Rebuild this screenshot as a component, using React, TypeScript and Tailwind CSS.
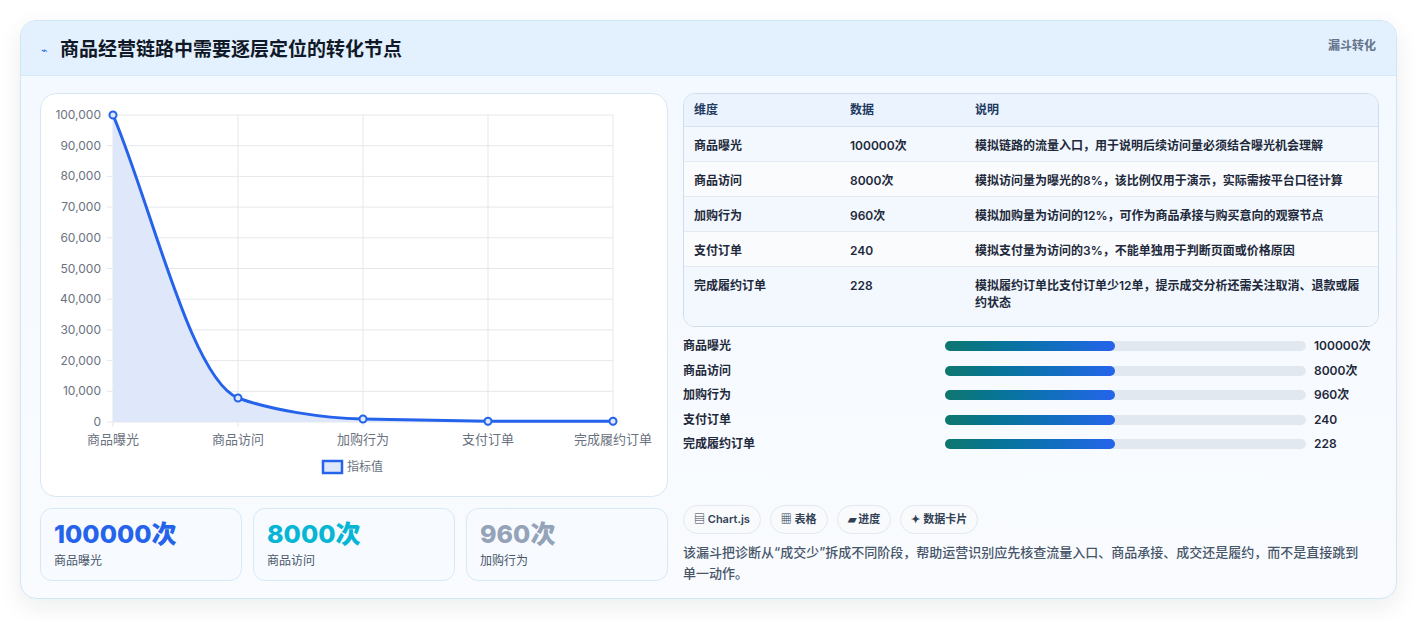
import React from 'react'

const rows = [
  ['商品曝光', '100000次', '模拟链路的流量入口，用于说明后续访问量必须结合曝光机会理解'],
  ['商品访问', '8000次', '模拟访问量为曝光的8%，该比例仅用于演示，实际需按平台口径计算'],
  ['加购行为', '960次', '模拟加购量为访问的12%，可作为商品承接与购买意向的观察节点'],
  ['支付订单', '240', '模拟支付量为访问的3%，不能单独用于判断页面或价格原因'],
  ['完成履约订单', '228', '模拟履约订单比支付订单少12单，提示成交分析还需关注取消、退款或履约状态'],
]

// chart coords are local to the chart box (box origin at 41,94)
const X = [72, 197, 322, 447, 572]
const yTop = 21
const yBot = 328
const yLabels = ['100,000', '90,000', '80,000', '70,000', '60,000', '50,000', '40,000', '30,000', '20,000', '10,000', '0']
const pts: [number, number][] = [
  [72, 21],
  [197, 304],
  [322, 325],
  [447, 327.3],
  [572, 327.3],
]

function Chart() {
  const line = `M72,21 C110,110 150,285 197,304 C230,316 280,324 322,325 C370,326 410,327 447,327.3 L572,327.3`
  return (
    <svg width="625" height="401" className="block" style={{ fontFamily: 'Inter, "Noto Sans CJK SC", sans-serif' }}>
      {yLabels.map((l, i) => {
        const y = yTop + (i * (yBot - yTop)) / 10
        return (
          <g key={l}>
            <line x1={66} x2={572} y1={y} y2={y} stroke="#e5e7eb" />
            <text x={60} y={y + 4} textAnchor="end" fontSize="12" fill="#6b7280">{l}</text>
          </g>
        )
      })}
      {X.map((x) => (
        <line key={x} x1={x} x2={x} y1={yTop} y2={yBot + 5} stroke="#e5e7eb" />
      ))}
      <path d={`${line} L572,328 L72,328 Z`} fill="#dfe8fb" />
      <path d={line} fill="none" stroke="#2563eb" strokeWidth="3" />
      {pts.map(([x, y], i) => (
        <circle key={i} cx={x} cy={y} r="3.5" fill="#dfe8fb" stroke="#2563eb" strokeWidth="2" />
      ))}
      {['商品曝光', '商品访问', '加购行为', '支付订单', '完成履约订单'].map((t, i) => (
        <text key={t} x={X[i]} y={350} textAnchor="middle" fontSize="13" fill="#6b7280">{t}</text>
      ))}
      <rect x={282} y={367} width={19} height={12} fill="#dfe8fb" stroke="#2563eb" strokeWidth="2.5" />
      <text x={306} y={377} fontSize="12" fill="#6b7280">指标值</text>
    </svg>
  )
}

export default function App() {
  return (
    <div className="w-[1417px] h-[621px] bg-white pt-5 pl-5" style={{ fontFamily: 'Inter, "Noto Sans CJK SC", sans-serif' }}>
      <div className="w-[1377px] h-[579px] rounded-2xl border border-[#cfe6f7] bg-gradient-to-b from-[#f3f9ff] to-[#f9fbfe] shadow-[0_8px_24px_rgba(15,23,42,0.08)] overflow-hidden">
        {/* Header */}
        <div className="h-[55px] bg-[#e3f0fd] border-b border-[#d5e8fa] flex items-start justify-between px-5">
          <div className="flex items-center gap-3 mt-[15px]">
            <span className="text-[#2563eb] text-[11px]">⌁</span>
            <h1 className="text-[19px] font-bold text-[#111827]">商品经营链路中需要逐层定位的转化节点</h1>
          </div>
          <span className="text-[12px] font-semibold text-[#64748b] mt-[16px]">漏斗转化</span>
        </div>

        <div className="flex gap-[15px] pl-[19px] pt-[17px]">
          {/* Left */}
          <div className="w-[628px] flex flex-col gap-[11px]">
            <div className="h-[404px] rounded-2xl border border-[#d9e7f2] bg-white">
              <Chart />
            </div>
            <div className="flex gap-[11px]">
              {[
                ['100000次', '商品曝光', 'text-[#2563eb]'],
                ['8000次', '商品访问', 'text-[#06b6d4]'],
                ['960次', '加购行为', 'text-[#94a3b8]'],
              ].map(([v, l, c]) => (
                <div key={l} className="w-[202px] h-[73px] rounded-xl border border-[#d6e9f5] bg-[#f7fbff] px-[13px] pt-[9px]">
                  <div className={`text-[25px] font-extrabold leading-[32px] ${c}`}>{v}</div>
                  <div className="text-[12px] text-[#475569] mt-[2px]">{l}</div>
                </div>
              ))}
            </div>
          </div>

          {/* Right */}
          <div className="w-[696px] flex flex-col">
            <div className="rounded-xl border border-[#cfdceb] overflow-hidden bg-white text-[12px] font-semibold text-[#1e293b]">
              <div className="flex h-[33px] items-center bg-[#eaf3fe] border-b border-[#d6e2ef] text-[#1e3a5f]">
                <div className="w-[166px] pl-[10px]">维度</div>
                <div className="w-[125px]">数据</div>
                <div className="flex-1">说明</div>
              </div>
              {rows.map((r, i) => (
                <div key={r[0]} className={`flex items-start pt-[10px] ${i === 4 ? 'h-[59px]' : 'h-[35px] border-b border-[#e3eaf2]'} ${i % 2 === 0 ? 'bg-[#f2f8fd]' : 'bg-[#f9fbfd]'}`}>
                  <div className="w-[166px] pl-[10px]">{r[0]}</div>
                  <div className="w-[125px]">{r[1]}</div>
                  <div className="flex-1 pr-[14px] leading-[17px]">{r[2]}</div>
                </div>
              ))}
            </div>

            <div className="mt-[11px] flex flex-col gap-[8px]">
              {rows.map((r) => (
                <div key={r[0]} className="flex items-center h-[16.5px] text-[12px] font-semibold text-[#1e293b]">
                  <div className="w-[262px]">{r[0]}</div>
                  <div className="w-[361px] h-[10px] rounded-full bg-[#e2e8f0]">
                    <div className="w-[170px] h-full rounded-full bg-gradient-to-r from-[#0f766e] to-[#2563eb]" />
                  </div>
                  <div className="ml-[8px]">{r[1]}</div>
                </div>
              ))}
            </div>

            <div className="mt-[52px] flex gap-[9px]">
              {['▤ Chart.js', '▦ 表格', '▰ 进度', '✦ 数据卡片'].map((t) => (
                <span key={t} className="h-[29px] px-[10px] flex items-center rounded-full border border-[#e2e8f0] bg-[#f8fafc] text-[11px] font-semibold text-[#334155]">{t}</span>
              ))}
            </div>
            <p className="mt-[8px] text-[13px] leading-[21px] text-[#475569] font-medium pr-[10px]">
              该漏斗把诊断从“成交少”拆成不同阶段，帮助运营识别应先核查流量入口、商品承接、成交还是履约，而不是直接跳到单一动作。
            </p>
          </div>
        </div>
      </div>
    </div>
  )
}
